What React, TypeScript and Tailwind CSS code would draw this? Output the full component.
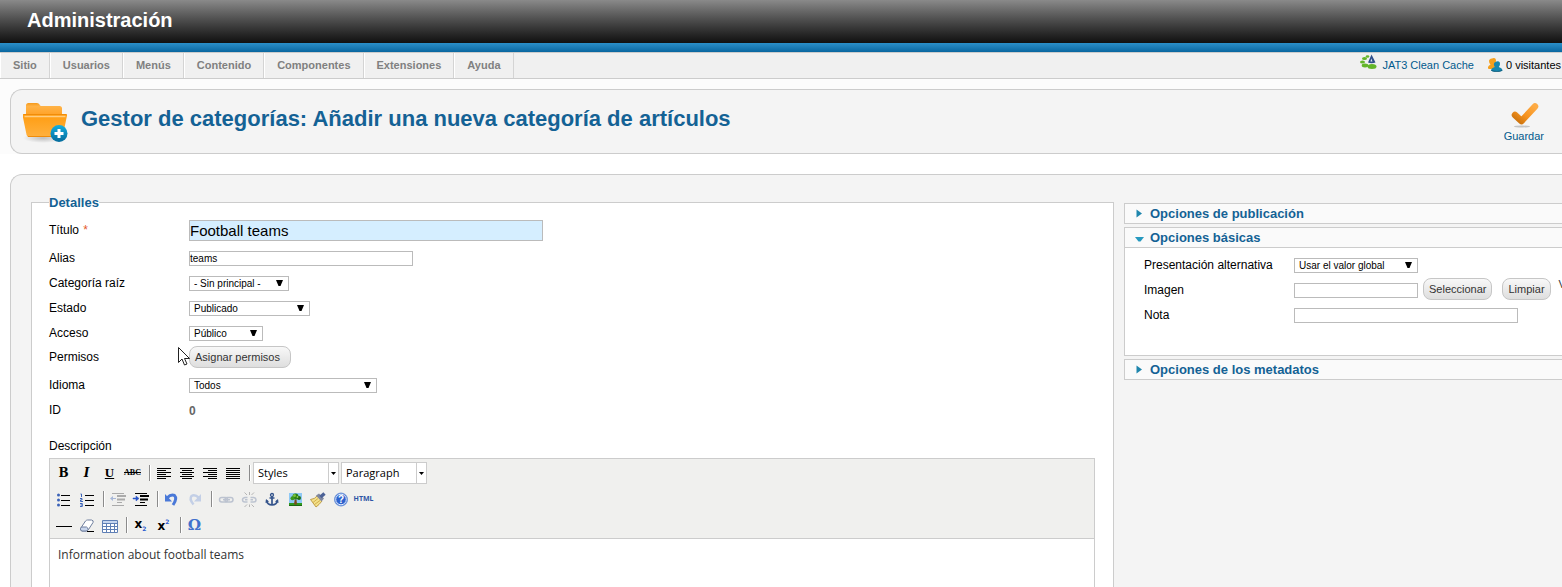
import type { ReactNode } from "react";

const MENU = ["Sitio", "Usuarios", "Menús", "Contenido", "Componentes", "Extensiones", "Ayuda"];

function FolderIcon() {
  return (
    <svg width="48" height="44" viewBox="0 0 48 44" aria-hidden="true">
      <defs>
        <linearGradient id="fback" x1="0" y1="0" x2="0" y2="1">
          <stop offset="0" stopColor="#f59a1c" />
          <stop offset="0.25" stopColor="#ffb347" />
          <stop offset="1" stopColor="#ffa024" />
        </linearGradient>
        <linearGradient id="ffront" x1="0" y1="0" x2="0" y2="1">
          <stop offset="0" stopColor="#ff9c10" />
          <stop offset="1" stopColor="#ffb13f" />
        </linearGradient>
        <linearGradient id="fplus" x1="0" y1="0" x2="0" y2="1">
          <stop offset="0" stopColor="#14aee0" />
          <stop offset="1" stopColor="#046b9c" />
        </linearGradient>
        <radialGradient id="fshadow">
          <stop offset="0" stopColor="#000" stopOpacity="0.22" />
          <stop offset="1" stopColor="#000" stopOpacity="0" />
        </radialGradient>
      </defs>
      <ellipse cx="20" cy="38" rx="20" ry="5" fill="url(#fshadow)" />
      <path d="M3 16V5.500Q3 3 5.500 3H14Q16.500 3 17 5.500L18 6H36.500Q39 6 39 8.500V16Z" fill="url(#fback)" />
      <path d="M-0.500 15Q-0.500 14 1 14H42.500Q44.200 14 44 15.500L40 35Q39.500 37 37.500 37H6Q4 37 3.600 35Z" fill="url(#ffront)" />
      <path d="M1.500 16.500H42.500" stroke="#ffcd80" strokeWidth="1.500" />
      <path d="M0.500 14.500H43.500M5 36.500H38" stroke="#f08c0a" strokeWidth="1" />
      <circle cx="36" cy="33.500" r="8.500" fill="url(#fplus)" />
      <path d="M36 29v9M31.500 33.500h9" stroke="#fff" strokeWidth="3" />
    </svg>
  );
}

function CheckIcon() {
  return (
    <svg width="30" height="26" viewBox="0 0 30 26" aria-hidden="true">
      <defs>
        <linearGradient id="chk" x1="0" y1="1" x2="1" y2="0">
          <stop offset="0" stopColor="#c9710c" />
          <stop offset="0.450" stopColor="#f7931e" />
          <stop offset="1" stopColor="#fdab45" />
        </linearGradient>
      </defs>
      <ellipse cx="13" cy="24.500" rx="8" ry="1" fill="#c4c4c4" />
      <path d="M6 13L12.500 19L26 4.500" fill="none" stroke="url(#chk)" strokeWidth="6.500" strokeLinecap="round" strokeLinejoin="round" />
    </svg>
  );
}

function CleanCacheIcon() {
  return (
    <svg width="18" height="16" viewBox="0 0 18 16" aria-hidden="true">
      <g fill="#63b52a">
        <ellipse cx="12" cy="12.500" rx="4.500" ry="2.500" />
        <ellipse cx="5" cy="11.500" rx="3.300" ry="1.900" />
        <ellipse cx="2.500" cy="8" rx="2.500" ry="1.600" />
        <ellipse cx="4.500" cy="4.500" rx="2.500" ry="1.500" />
        <ellipse cx="7.500" cy="2.500" rx="1.800" ry="1.200" />
      </g>
      <path d="M8 8.500L11.500 0.500L15.500 8.500Q11.500 10 8 8.500Z" fill="#2f4f8a" />
      <path d="M10.500 7.500L11.200 4.500L12.500 7.500Z" fill="#dfe6f2" />
    </svg>
  );
}

function UsersIcon() {
  return (
    <svg width="16" height="16" viewBox="0 0 16 16" aria-hidden="true">
      <path d="M5 1.500Q9 0 9 4Q9 6 7.500 7.500Q9 8.500 9 12H2Q0.500 12 1 10Q1.500 8.500 3.500 7.500Q2 6 2 4Q2 2 5 1.500Z" fill="#f5a01e" />
      <path d="M9.500 4.500Q13 3.500 13 7Q13 8.500 11.800 10Q15 11 15.500 13Q15.500 14.500 9.500 14.500Q4 14.500 4 13Q4.500 11.200 7.800 10Q6.800 8.500 6.800 7Q7 5 9.500 4.500Z" fill="#1787b0" />
      <path d="M4 13Q10 15 15.500 13Q15.500 14.800 9.500 14.800Q4 14.800 4 13Z" fill="#0b5777" />
    </svg>
  );
}

function Cursor() {
  return (
    <svg className="pointer-events-none absolute top-px left-[129px]" width="13" height="20" viewBox="0 0 13 20" aria-hidden="true">
      <path d="M0.500 0.500V15.500L4 12L6.500 18L9 17L6.500 11.500H11.500Z" fill="#fff" stroke="#222" />
    </svg>
  );
}

function Select({ id, options, className }: { id: string; options: string[]; className: string }) {
  return (
    <div className={`grid h-[15px] items-center ${className}`}>
      <select
        id={id}
        className="col-start-1 row-start-1 h-[15px] w-full appearance-none border border-[#bbb] bg-white py-0 pr-4 pl-1 text-[10px] leading-[13px] text-black"
      >
        {options.map((o) => (
          <option key={o}>{o}</option>
        ))}
      </select>
      <svg className="pointer-events-none col-start-1 row-start-1 mr-[6px] justify-self-end" width="7" height="9" viewBox="0 0 7 9" aria-hidden="true">
        <path d="M0 1H7L4.500 7H2.500Z" fill="#000" />
      </svg>
    </div>
  );
}

function TextInput({ id, value, className }: { id: string; value?: string; className: string }) {
  return <input id={id} type="text" defaultValue={value} className={`border border-[#bbb] text-black ${className}`} />;
}

function PillButton({ children, className }: { children: ReactNode; className?: string }) {
  return (
    <button
      type="button"
      className={`h-[22px] self-start rounded-lg border border-[#c6c6c6] bg-linear-to-b from-[#f8f8f8] via-[#ebebeb] via-50% to-[#dedede] px-[5px] text-left text-[11px] text-[#333] ${className ?? ""}`}
    >
      {children}
    </button>
  );
}

function Row({ label, htmlFor, height, children }: { label: ReactNode; htmlFor?: string; height?: string; children?: ReactNode }) {
  return (
    <div className={`relative flex items-center ${height ?? "h-[25px]"}`}>
      <label htmlFor={htmlFor} className="w-[140px] shrink-0 pb-[2px]">
        {label}
      </label>
      {children}
    </div>
  );
}

function OptionRow({ label, htmlFor, children }: { label: string; htmlFor: string; children: ReactNode }) {
  return (
    <div className="flex h-[25px] items-center whitespace-nowrap">
      <label htmlFor={htmlFor} className="w-[150px] shrink-0 pb-[2px]">
        {label}
      </label>
      {children}
    </div>
  );
}

function PanelHeader({ title, open }: { title: string; open?: boolean }) {
  return (
    <h3 className="border border-r-0 border-[#ccc] bg-[#fafafa]">
      <button type="button" className="flex h-[19px] w-full items-center pl-[10px] text-[13px] font-bold text-[#146295]">
        <svg width="15" height="10" viewBox="0 0 15 10" aria-hidden="true">
          {open ? <path d="M0 4H9L5.500 8.500H3.500Z" fill="#2699bf" /> : <path d="M1.500 0.500V8.500L7 4.500Z" fill="#1f86ad" />}
        </svg>
        {title}
      </button>
    </h3>
  );
}

function Tool({ label, children }: { label: string; children: ReactNode }) {
  return (
    <button type="button" aria-label={label} title={label} className="flex h-[26px] w-[23px] shrink-0 items-center justify-center">
      {children}
    </button>
  );
}

function Sep() {
  return (
    <span className="flex w-2 shrink-0 justify-end pr-px">
      <span className="h-4 w-[2px] border-r border-l border-r-white border-l-[#8b8b8b]" />
    </span>
  );
}

function Icon({ children }: { children: ReactNode }) {
  return (
    <svg width="20" height="20" viewBox="0 0 20 20" fill="none" aria-hidden="true">
      {children}
    </svg>
  );
}

function Lines({ d }: { d: string }) {
  return (
    <Icon>
      <path d={d} stroke="#000" shapeRendering="crispEdges" />
    </Icon>
  );
}

function ToolSelect({ label, options }: { label: string; options: string[] }) {
  return (
    <div className="grid h-[22px] w-[86px] items-center">
      <select
        aria-label={label}
        className="col-start-1 row-start-1 h-[22px] w-full appearance-none border border-[#ccc] bg-white py-0 pr-3 pl-1 font-['Open_Sans',sans-serif] text-[11px] text-black"
      >
        {options.map((o) => (
          <option key={o}>{o}</option>
        ))}
      </select>
      <svg className="pointer-events-none col-start-1 row-start-1 justify-self-end" width="11" height="22" viewBox="0 0 11 22" aria-hidden="true">
        <path d="M0.500 1V21" stroke="#ccc" />
        <path d="M3 10H8L5.500 13Z" fill="#000" />
      </svg>
    </div>
  );
}

function Toolbar() {
  return (
    <div className="border-b border-[#ccc] bg-[#f0f0ee] pt-px pl-[2px]" role="toolbar" aria-label="Formato">
      <div className="flex h-[26px] items-center">
        <Tool label="Negrita">
          <span className="font-['DejaVu_Serif',serif] text-[12px] font-black">B</span>
        </Tool>
        <Tool label="Cursiva">
          <span className="font-['DejaVu_Serif',serif] text-[12px] font-bold italic">I</span>
        </Tool>
        <Tool label="Subrayado">
          <span className="font-['Liberation_Serif',serif] text-[13px] font-bold underline">U</span>
        </Tool>
        <Tool label="Tachado">
          <span className="font-['Liberation_Serif',serif] text-[8px] font-bold text-black line-through">ABC</span>
        </Tool>
        <Sep />
        <Tool label="Izquierda">
          <Lines d="M3 5.500H17M3 7.500H12M3 9.500H17M3 11.500H12M3 13.500H17M3 15.500H12" />
        </Tool>
        <Tool label="Centro">
          <Lines d="M3 5.500H17M5 7.500H15M3 9.500H17M5 11.500H15M3 13.500H17M5 15.500H15" />
        </Tool>
        <Tool label="Derecha">
          <Lines d="M3 5.500H17M8 7.500H17M3 9.500H17M8 11.500H17M3 13.500H17M8 15.500H17" />
        </Tool>
        <Tool label="Justificado">
          <Lines d="M3 5.500H17M3 7.500H17M3 9.500H17M3 11.500H17M3 13.500H17M3 15.500H17" />
        </Tool>
        <Sep />
        <div className="ml-px flex gap-[2px]">
          <ToolSelect label="Estilos" options={["Styles"]} />
          <ToolSelect label="Formato de párrafo" options={["Paragraph"]} />
        </div>
      </div>
      <div className="flex h-[26px] items-center">
        <Tool label="Lista">
          <Icon>
            <path d="M7 6.500H16M7 11.500H16M7 16.500H16" stroke="#000" shapeRendering="crispEdges" />
            <g fill="#3b63b8">
              <circle cx="4.500" cy="6" r="1.500" />
              <circle cx="4.500" cy="11" r="1.500" />
              <circle cx="4.500" cy="16" r="1.500" />
            </g>
          </Icon>
        </Tool>
        <Tool label="Lista numerada">
          <Icon>
            <path d="M8 6.500H17M8 11.500H17M8 16.500H17" stroke="#000" shapeRendering="crispEdges" />
            <path d="M3.500 5h1v3M3 9.500h2v1.500h-1.500v1.500h2.500M3 14.500h2.300v3h-2.300M3.500 16h1.500" stroke="#3b63b8" />
          </Icon>
        </Tool>
        <Sep />
        <Tool label="Reducir sangría">
          <Icon>
            <path d="M4 4.500H16M9 13.500H14M4 16.500H16" stroke="#aaa" />
            <path d="M9 7H18M9 10.500H17" stroke="#aaa" strokeWidth="2" />
            <path d="M2 9.500L5 7V9H8V10H5V12Z" fill="#a8b8d8" />
          </Icon>
        </Tool>
        <Tool label="Aumentar sangría">
          <Icon>
            <path d="M4 4.500H16M4 16.500H16M9 13.500H14" stroke="#000" />
            <path d="M9 7H18M9 10.500H17" stroke="#000" strokeWidth="2" />
            <path d="M8 9.500L5 7V9H2V10H5V12Z" fill="#2a55c8" stroke="#2a55c8" strokeWidth="0.500" />
          </Icon>
        </Tool>
        <Sep />
        <Tool label="Deshacer">
          <Icon>
            <path d="M5 9Q9 5 12.500 6.500Q15.500 9.500 11 16" stroke="#4a79d8" strokeWidth="3" />
            <path d="M3 5V12.500H10Z" fill="#4a79d8" />
          </Icon>
        </Tool>
        <Tool label="Rehacer">
          <Icon>
            <path d="M14 9Q10 5 6.500 7Q4 10 8.500 15.500" stroke="#c3cfe6" strokeWidth="2.500" />
            <path d="M16 5V12.500H9Z" fill="#c3cfe6" />
          </Icon>
        </Tool>
        <Sep />
        <Tool label="Insertar enlace">
          <Icon>
            <rect x="3.500" y="8.500" width="8" height="4.500" rx="2.200" stroke="#bcc3d0" strokeWidth="1.500" />
            <rect x="9" y="8.500" width="8" height="4.500" rx="2.200" stroke="#bcc3d0" strokeWidth="1.500" />
            <path d="M7 10.700H14" stroke="#bcc3d0" strokeWidth="1.500" />
          </Icon>
        </Tool>
        <Tool label="Quitar enlace">
          <Icon>
            <path d="M8.500 8.500H6Q3.500 9 3.500 10.700Q3.500 13 6 13H8.500M11.500 8.500H14.500Q17 9 17 10.700Q17 13 14.500 13H11.500M6 10.700H8.500M11.500 10.700H14" stroke="#bcc3d0" strokeWidth="1.500" />
            <path d="M5.500 3.500L8 6M15 3.500L12.500 6M10.500 3V6M5.500 18L8 15.500M15 18L12.500 15.500M10.500 15.500V18" stroke="#b5b5b5" />
          </Icon>
        </Tool>
        <Tool label="Ancla">
          <Icon>
            <circle cx="10" cy="6" r="1.500" stroke="#34548c" strokeWidth="1.300" />
            <path d="M10 7.500V16.500M7.500 9H12.500M4.500 11.500Q5.500 16 10 16Q14.500 16 15.500 11.500" stroke="#34548c" strokeWidth="1.700" />
            <path d="M3.500 14L4 10L7 12.500ZM16.500 14L16 10L13 12.500Z" fill="#34548c" />
          </Icon>
        </Tool>
        <Tool label="Imagen">
          <Icon>
            <rect x="4" y="4" width="13" height="13" fill="#8fc9f5" />
            <path d="M4 14H17V17H4Z" fill="#2f9a1e" />
            <path d="M9.700 10.500H11.500L12 15.500H9Z" fill="#7b4a1d" />
            <circle cx="10.500" cy="7.500" r="3" fill="#2a7f16" />
            <circle cx="7.500" cy="9.200" r="2" fill="#3c981c" />
            <circle cx="14" cy="9" r="2" fill="#1f6c14" />
            <circle cx="9.500" cy="6.500" r="1.500" fill="#79c23b" />
            <circle cx="12.500" cy="8" r="0.900" fill="#8bd048" />
            <path d="M4 16.500H17" stroke="#1c6811" />
          </Icon>
        </Tool>
        <Tool label="Limpiar código">
          <Icon>
            <path d="M2.500 10.500Q7 10 9 7L14 12Q11 16 8 18Z" fill="#f3e08a" stroke="#b48b2c" strokeWidth="0.800" />
            <path d="M5 13.500L10 9.500M6.500 15.500L12 11.500" stroke="#c9a23c" strokeWidth="0.800" />
            <path d="M8 6.500L11 4.500L16 9.500L13.500 12.500Z" fill="#8088a0" />
            <path d="M12.500 8L16.500 4.500" stroke="#4b6196" strokeWidth="3.500" />
          </Icon>
        </Tool>
        <Tool label="Ayuda">
          <svg width="20" height="20" viewBox="0 0 20 20" aria-hidden="true">
            <circle cx="10" cy="10.500" r="6.500" fill="#2f65d0" stroke="#7398d8" />
            <circle cx="10" cy="10.500" r="5.300" fill="#2c62ce" stroke="#e8f0ff" />
            <text x="10" y="14" textAnchor="middle" fontFamily="Liberation Sans, sans-serif" fontSize="10" fontWeight="bold" fill="#fff">
              ?
            </text>
          </svg>
        </Tool>
        <Tool label="Editar código HTML">
          <span className="font-['Noto_Sans',sans-serif] text-[7px] font-bold text-[#2d55a5]">HTML</span>
        </Tool>
      </div>
      <div className="flex h-[26px] items-center">
        <Tool label="Línea horizontal">
          <Lines d="M2 11.500H18" />
        </Tool>
        <Tool label="Quitar formato">
          <Icon>
            <path d="M3.500 13.500L8.500 6Q9.500 5 10.500 5H14.500Q17 5.500 16 7.500L11.500 14.500Q10.500 16 9 16H5Q3 15.500 3.500 13.500Z" fill="#fff" stroke="#6f7f9e" />
            <path d="M3.500 13.500Q4 12 5 12H9.500Q11 12.500 11 14.500L9.500 16H5Q3 15.500 3.500 13.500Z" fill="#c8d5ec" stroke="#6f7f9e" />
            <path d="M10 16.500H17" stroke="#000" />
          </Icon>
        </Tool>
        <Tool label="Tabla">
          <Icon>
            <path d="M2.500 5.500H17.500V17.500H2.500Z" fill="#fff" stroke="#5f7fb5" />
            <path d="M3 6H17V8H3Z" fill="#c6d6ef" />
            <path d="M3 8.500H17M3 11.500H17M3 14.500H17M6.500 8V17M10.500 8V17M14.500 8V17" stroke="#5f7fb5" />
          </Icon>
        </Tool>
        <Sep />
        <Tool label="Subíndice">
          <span className="font-['DejaVu_Sans',sans-serif] text-[12px] leading-none font-bold">
            x<span className="align-[-3px] text-[6px] text-[#2a5bd0]">2</span>
          </span>
        </Tool>
        <Tool label="Superíndice">
          <span className="font-['DejaVu_Sans',sans-serif] text-[12px] leading-none font-bold">
            x<span className="align-[6px] text-[6px] text-[#2a5bd0]">2</span>
          </span>
        </Tool>
        <Sep />
        <Tool label="Carácter especial">
          <span className="font-['DejaVu_Serif',serif] text-[15px] leading-none font-bold text-[#4070cc]">Ω</span>
        </Tool>
      </div>
    </div>
  );
}

export default function App() {
  return (
    <div className="flex min-h-screen flex-col overflow-hidden bg-white font-['Liberation_Sans',Arial,sans-serif] text-[12px] leading-4 text-black">
      <header>
        <div className="flex h-[43px] items-center bg-linear-to-b from-[#8a8a8a] to-[#111] pb-[3px] pl-[27px]">
          <span className="text-[20px] font-bold text-white">Administración</span>
        </div>
        <div className="h-[9px] bg-linear-to-b from-[#2a8fc9] to-[#0867a0]" />
        <div className="flex h-[27px] justify-between border-t border-b border-[#ccc] bg-[#f0f0f0] text-[11px]">
          <nav className="flex">
            {MENU.map((m) => (
              <a key={m} href="#" className="flex items-center border-r border-l border-r-[#d4d4d4] border-l-white px-3 pb-[2px] font-bold text-[#808080]">
                {m}
              </a>
            ))}
          </nav>
          <div className="flex items-center pb-[2px]">
            <a href="#" className="flex items-center text-[#025a8d]">
              <span className="mr-1 -mt-[6px]">
                <CleanCacheIcon />
              </span>
              JAT3 Clean Cache
            </a>
            <span className="ml-[13px] flex items-center gap-[3px] pr-px">
              <UsersIcon />0 visitantes
            </span>
          </div>
        </div>
      </header>

      <div className="bg-[#fcfcfc] pt-[10px] pl-[10px]">
        <div className="flex h-[65px] items-center justify-between rounded-l-xl border border-r-0 border-[#ccc] bg-[#f4f4f4] pl-3">
          <div className="flex items-center">
            <FolderIcon />
            <h1 className="ml-[10px] pb-[6px] text-[22px] leading-7 font-bold text-[#146295]">Gestor de categorías: Añadir una nueva categoría de artículos</h1>
          </div>
          <button type="button" className="mr-[18px] flex flex-col items-center pt-[2px] text-[11px] leading-4 text-[#025a8d]">
            <CheckIcon />
            Guardar
          </button>
        </div>
      </div>

      <main className="mt-5 ml-[10px] grid flex-1 grid-cols-[minmax(0,1fr)_438px] gap-[10px] rounded-tl-xl border-t border-l border-[#ccc] bg-[#f4f4f4] pt-[18px] pl-5">
        <fieldset className="flex min-h-[390px] flex-col border border-b-0 border-[#ccc] bg-white pt-[5px] pr-[18px] pl-[17px]">
          <legend className="pt-[2px] text-[13px] leading-4 font-bold text-[#146295]">Detalles</legend>
          <Row
            label={
              <>
                Título <span className="ml-px text-[#e4582b]">*</span>
              </>
            }
            htmlFor="title"
            height="mb-px h-[29px]"
          >
            <TextInput id="title" value="Football teams" className="h-[21px] w-[354px] bg-[#d5eeff] text-[15px]" />
          </Row>
          <Row label="Alias" htmlFor="alias">
            <TextInput id="alias" value="teams" className="h-[15px] w-56 bg-white text-[10px]" />
          </Row>
          <Row label="Categoría raíz" htmlFor="parent">
            <Select id="parent" options={["- Sin principal -"]} className="w-[100px]" />
          </Row>
          <Row label="Estado" htmlFor="state">
            <Select id="state" options={["Publicado", "Despublicado"]} className="w-[121px]" />
          </Row>
          <Row label="Acceso" htmlFor="access">
            <Select id="access" options={["Público"]} className="w-[74px]" />
          </Row>
          <Row label="Permisos" height="h-[27px] pb-[3px]">
            <PillButton className="w-[102px]">Asignar permisos</PillButton>
            <Cursor />
          </Row>
          <Row label="Idioma" htmlFor="language">
            <Select id="language" options={["Todos"]} className="w-[188px]" />
          </Row>
          <Row label="ID">
            <span className="font-bold text-[#666]">0</span>
          </Row>
          <label htmlFor="description" className="mt-[15px] mb-1">
            Descripción
          </label>
          <div className="flex flex-1 flex-col border border-b-0 border-[#ccc]">
            <Toolbar />
            <textarea
              id="description"
              defaultValue="Information about football teams"
              className="block w-full flex-1 resize-none bg-white px-2 pt-2 font-['Open_Sans',sans-serif] text-[12px] leading-4 text-[#333] outline-none"
            />
          </div>
        </fieldset>

        <aside className="mt-[10px] flex flex-col gap-[3px]">
          <PanelHeader title="Opciones de publicación" />
          <section>
            <PanelHeader title="Opciones básicas" open />
            <div className="overflow-hidden border-b border-l border-[#ccc] bg-white pt-[5px] pb-[27px] pl-[19px]">
              <OptionRow label="Presentación alternativa" htmlFor="layout">
                <Select id="layout" options={["Usar el valor global"]} className="w-[124px]" />
              </OptionRow>
              <OptionRow label="Imagen" htmlFor="image">
                <TextInput id="image" className="h-[15px] w-[124px] shrink-0 bg-white text-[10px]" />
                <PillButton className="ml-[5px] shrink-0">Seleccionar</PillButton>
                <PillButton className="ml-[10px] shrink-0">Limpiar</PillButton>
                <a href="#" className="ml-2 self-start text-[11px] leading-3 text-[#333]">
                  Vista previa
                </a>
              </OptionRow>
              <OptionRow label="Nota" htmlFor="note">
                <TextInput id="note" className="h-[15px] w-56 bg-white text-[10px]" />
              </OptionRow>
            </div>
          </section>
          <PanelHeader title="Opciones de los metadatos" />
        </aside>
      </main>
    </div>
  );
}
